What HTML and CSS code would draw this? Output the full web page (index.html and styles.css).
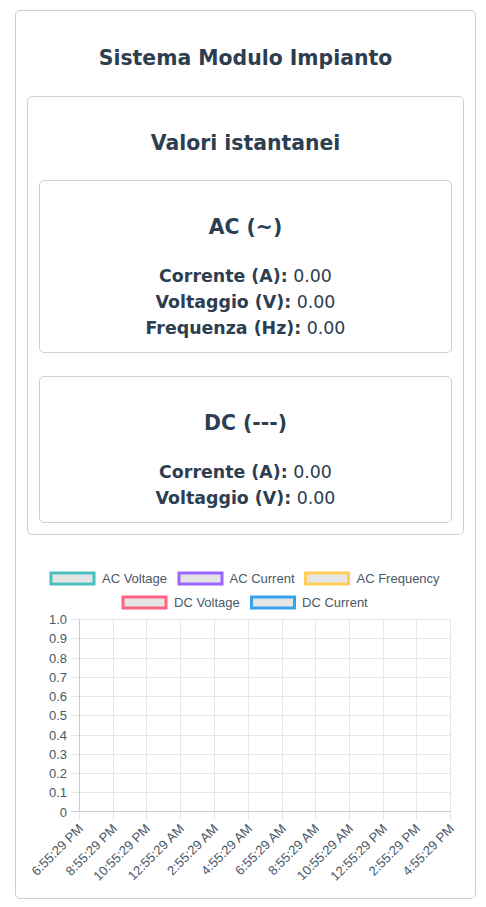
FILE: index.html
```html
<!DOCTYPE html>
<html lang="it">
<head>
<meta charset="utf-8">
<title>Sistema Modulo Impianto</title>
<link rel="stylesheet" href="styles.css">
</head>
<body>
<div class="outer-card">
  <h2 class="main-title">Sistema Modulo Impianto</h2>
  <div class="card values-card">
    <h3 class="card-title">Valori istantanei</h3>
    <div class="card sub-card">
      <h3 class="card-title">AC (~)</h3>
      <div class="lines">
        <p class="line"><strong>Corrente (A):</strong> 0.00</p>
        <p class="line"><strong>Voltaggio (V):</strong> 0.00</p>
        <p class="line"><strong>Frequenza (Hz):</strong> 0.00</p>
      </div>
    </div>
    <div class="card sub-card dc-card">
      <h3 class="card-title">DC (---)</h3>
      <div class="lines">
        <p class="line"><strong>Corrente (A):</strong> 0.00</p>
        <p class="line"><strong>Voltaggio (V):</strong> 0.00</p>
      </div>
    </div>
  </div>
  <svg class="chart" viewBox="16 546 459 352" width="459" height="352" xmlns="http://www.w3.org/2000/svg">
    <g class="legend">
      <rect x="51" y="573" width="43" height="11" fill="#e5e5e5" stroke="#4bc0c0" stroke-width="3"/>
      <text x="102" y="582.5">AC Voltage</text>
      <rect x="179" y="573" width="43" height="11" fill="#e5e5e5" stroke="#9966ff" stroke-width="3"/>
      <text x="229.5" y="582.5">AC Current</text>
      <rect x="305.5" y="573" width="43" height="11" fill="#e5e5e5" stroke="#ffcd56" stroke-width="3"/>
      <text x="356.5" y="582.5">AC Frequency</text>
      <rect x="123" y="597" width="43" height="11" fill="#e5e5e5" stroke="#ff6384" stroke-width="3"/>
      <text x="174" y="606.5">DC Voltage</text>
      <rect x="251.5" y="597" width="43" height="11" fill="#e5e5e5" stroke="#36a2eb" stroke-width="3"/>
      <text x="302" y="606.5">DC Current</text>
    </g>
    <g class="grid">
      <line x1="71" y1="619.5" x2="450.5" y2="619.5"/>
      <line x1="71" y1="638.5" x2="450.5" y2="638.5"/>
      <line x1="71" y1="658.5" x2="450.5" y2="658.5"/>
      <line x1="71" y1="677.5" x2="450.5" y2="677.5"/>
      <line x1="71" y1="696.5" x2="450.5" y2="696.5"/>
      <line x1="71" y1="715.5" x2="450.5" y2="715.5"/>
      <line x1="71" y1="735.5" x2="450.5" y2="735.5"/>
      <line x1="71" y1="754.5" x2="450.5" y2="754.5"/>
      <line x1="71" y1="773.5" x2="450.5" y2="773.5"/>
      <line x1="71" y1="792.5" x2="450.5" y2="792.5"/>
      <line x1="79.5" y1="619" x2="79.5" y2="820"/>
      <line x1="113.5" y1="619" x2="113.5" y2="820"/>
      <line x1="146.5" y1="619" x2="146.5" y2="820"/>
      <line x1="180.5" y1="619" x2="180.5" y2="820"/>
      <line x1="214.5" y1="619" x2="214.5" y2="820"/>
      <line x1="248.5" y1="619" x2="248.5" y2="820"/>
      <line x1="282.5" y1="619" x2="282.5" y2="820"/>
      <line x1="315.5" y1="619" x2="315.5" y2="820"/>
      <line x1="349.5" y1="619" x2="349.5" y2="820"/>
      <line x1="383.5" y1="619" x2="383.5" y2="820"/>
      <line x1="416.5" y1="619" x2="416.5" y2="820"/>
      <line x1="450.5" y1="619" x2="450.5" y2="820"/>
    </g>
    <line class="axis" x1="71" y1="811.5" x2="450.5" y2="811.5"/>
    <line class="axis" x1="79.5" y1="619" x2="79.5" y2="812"/>
    <g class="yticks">
      <text x="67" y="624">1.0</text>
      <text x="67" y="643">0.9</text>
      <text x="67" y="662.5">0.8</text>
      <text x="67" y="681.5">0.7</text>
      <text x="67" y="700.5">0.6</text>
      <text x="67" y="720">0.5</text>
      <text x="67" y="739.5">0.4</text>
      <text x="67" y="758.5">0.3</text>
      <text x="67" y="777.5">0.2</text>
      <text x="67" y="797">0.1</text>
      <text x="67" y="816.5">0</text>
    </g>
    <g class="xticks">
      <text transform="translate(81.5 827) rotate(-45)">6:55:29 PM</text>
      <text transform="translate(115.5 827) rotate(-45)">8:55:29 PM</text>
      <text transform="translate(148.5 827) rotate(-45)">10:55:29 PM</text>
      <text transform="translate(182.5 827) rotate(-45)">12:55:29 AM</text>
      <text transform="translate(216.5 827) rotate(-45)">2:55:29 AM</text>
      <text transform="translate(250.5 827) rotate(-45)">4:55:29 AM</text>
      <text transform="translate(284.5 827) rotate(-45)">6:55:29 AM</text>
      <text transform="translate(317.5 827) rotate(-45)">8:55:29 AM</text>
      <text transform="translate(351.5 827) rotate(-45)">10:55:29 AM</text>
      <text transform="translate(385.5 827) rotate(-45)">12:55:29 PM</text>
      <text transform="translate(418.5 827) rotate(-45)">2:55:29 PM</text>
      <text transform="translate(452.5 827) rotate(-45)">4:55:29 PM</text>
    </g>
  </svg>
</div>
</body>
</html>
```

FILE: styles.css
```css
* { box-sizing: border-box; }
html, body { margin: 0; padding: 0; background: #fff; }
body {
  font-family: "DejaVu Sans", sans-serif;
  color: #2c3e50;
}
.outer-card {
  margin: 10px 10px 8px 15px;
  border: 1px solid #cfcfcf;
  border-radius: 5px;
  padding: 35px 11px 0 11px;
}
.main-title {
  margin: 0;
  font-size: 20.4px;
  line-height: 24px;
  font-weight: bold;
  text-align: center;
}
.card {
  border: 1px solid #cfcfcf;
  border-radius: 5px;
}
.values-card {
  margin-top: 26px;
  padding: 34px 11px 11px 11px;
}
.card-title {
  margin: 0;
  font-size: 20.4px;
  line-height: 24px;
  font-weight: bold;
  text-align: center;
}
.sub-card {
  margin-top: 25px;
  padding: 34px 0 11px 0;
}
.dc-card { margin-top: 23px; }
.lines { margin-top: 24px; }
.line {
  margin: 0;
  font-size: 17.4px;
  line-height: 26px;
  text-align: center;
}
.line strong { font-weight: bold; }
.chart {
  display: block;
  margin: 11px -11px 0 -11px;
}
.legend text, .yticks text, .xticks text {
  font-family: "Liberation Sans", Arial, sans-serif;
  font-size: 13px;
  fill: #4a5868;
}
.yticks text { text-anchor: end; }
.xticks text { text-anchor: end; dominant-baseline: middle; }
.grid line { stroke: #e6e6e6; stroke-width: 1; }
.axis { stroke: #cccccc; stroke-width: 1; }
```
